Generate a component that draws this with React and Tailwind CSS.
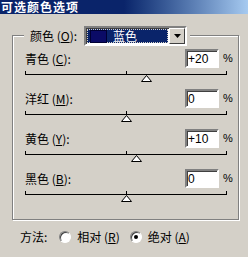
const FONT = { fontFamily: '"Noto Sans CJK SC", "Liberation Sans", sans-serif' };

const rows = [
  { name: '青色', key: 'C', value: '+20', pos: 20 },
  { name: '洋红', key: 'M', value: '0', pos: 0 },
  { name: '黄色', key: 'Y', value: '+10', pos: 10 },
  { name: '黑色', key: 'B', value: '0', pos: 0 },
];

function Thumb() {
  return (
    <svg width="11" height="7" viewBox="0 0 11 7">
      <path d="M5.5 0.5 L10.5 6.5 L0.5 6.5 Z" fill="#fff" stroke="#000" strokeWidth="1" />
    </svg>
  );
}

function Radio({ checked }) {
  return (
    <span className="flex h-[12px] w-[12px] items-center justify-center rounded-full border border-t-[#808080] border-l-[#808080] border-b-white border-r-white bg-white shadow-[inset_1px_1px_0_#404040]">
      {checked && <span className="h-[4px] w-[4px] rounded-full bg-black" />}
    </span>
  );
}

function Row({ name, keyChar, value, pos }) {
  return (
    <div className="h-[40px]">
      <div className="flex h-[19px] items-center pl-[12px] pr-[5px]">
        <span className="flex-1 text-[12px] text-black">
          {name} (<span className="underline">{keyChar}</span>):
        </span>
        <div className="flex h-[19px] w-[34px] items-center border-2 border-t-[#808080] border-l-[#808080] border-b-white border-r-white bg-white pl-[1px] text-[12px] leading-none text-black shadow-[inset_1px_1px_0_#404040]" style={{ fontFamily: '"Liberation Sans", sans-serif' }}>
          {value}
        </div>
        <span className="ml-[4px] w-[10px] text-[11px] text-black" style={{ fontFamily: '"Liberation Sans", sans-serif' }}>%</span>
      </div>
      <div className="relative ml-[12px] mt-[3px] h-[4px] w-[202px] border-x border-b border-black">
        <div className="absolute left-[100px] top-0 h-[4px] w-px bg-black" />
        <div className="absolute top-[4px] flex" style={{ left: 95 + pos }}>
          <Thumb />
        </div>
      </div>
    </div>
  );
}

export default function App() {
  return (
    <div className="relative h-[257px] w-[248px] overflow-hidden bg-[#d4d0c8]" style={FONT}>
      <div className="flex h-[14px] items-center bg-gradient-to-r from-[#0a246a] via-[#0a246a] to-[#a6caf0] pl-[1px] text-[12px] font-bold leading-[12px] tracking-[1px] text-white">
        可选颜色选项
      </div>

      <div className="ml-[12px] mt-[21px] h-[185px] w-[227px] border border-[#808080] shadow-[inset_1px_1px_0_#fff,1px_1px_0_#fff]">
        <div className="-mt-[10px] flex h-[20px] items-center">
          <div className="ml-[11px] flex h-[20px] items-center bg-[#d4d0c8] pl-[6px] pr-[3px]">
            <span className="w-[54px] text-[12px] text-black">
              颜色 (<span className="underline">O</span>):
            </span>
            <div className="flex h-[20px] w-[103px] items-stretch border-2 border-t-[#808080] border-l-[#808080] border-b-white border-r-white bg-white shadow-[inset_1px_1px_0_#404040]">
              <div className="m-[1px] flex flex-1 items-center border border-dotted border-[#d4d0c8] bg-[#0a246a]">
                <span className="ml-[2px] h-[13px] w-[17px] border border-[#000033] bg-[#0b0b66]" />
                <span className="ml-[6px] text-[12px] leading-none text-white">蓝色</span>
              </div>
              <div className="flex w-[16px] items-center justify-center border border-t-white border-l-white border-b-[#404040] border-r-[#404040] bg-[#d4d0c8]">
                <svg width="7" height="4" viewBox="0 0 7 4"><path d="M0 0 H7 L3.5 4 Z" fill="#000" /></svg>
              </div>
            </div>
          </div>
        </div>

        <div className="mt-[3px]">
          {rows.map((r) => (
            <Row key={r.key} name={r.name} keyChar={r.key} value={r.value} pos={r.pos} />
          ))}
        </div>
      </div>

      <div className="mt-[8px] flex items-center pl-[20px] text-[12px] text-black">
        <span>方法:</span>
        <span className="ml-[12px]"><Radio /></span>
        <span className="ml-[6px]">相对 (<span className="underline">R</span>)</span>
        <span className="ml-[10px]"><Radio checked /></span>
        <span className="ml-[6px]">绝对 (<span className="underline">A</span>)</span>
      </div>
    </div>
  );
}
